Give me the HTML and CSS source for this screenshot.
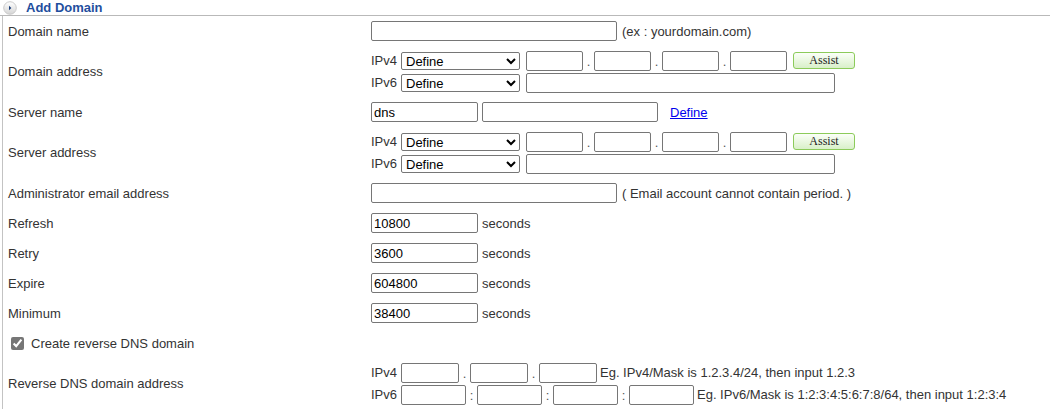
FILE: index.html
```html
<!DOCTYPE html>
<html>
<head>
<meta charset="utf-8">
<title>Add Domain</title>
<link rel="stylesheet" href="styles.css">
</head>
<body>
<div class="title">
  <svg class="icon" width="14" height="14" viewBox="0 0 14 14">
    <defs>
      <linearGradient id="g" x1="0" y1="0" x2="0" y2="1">
        <stop offset="0" stop-color="#ffffff"/>
        <stop offset="1" stop-color="#d4d4d4"/>
      </linearGradient>
    </defs>
    <circle cx="7" cy="7" r="6.3" fill="url(#g)" stroke="#c6c6c6" stroke-width="0.9"/>
    <path d="M6 4.8 L8.4 7 L6 9.2 Z" fill="#1c3f7a"/>
  </svg>
  <h1 class="title-text">Add Domain</h1>
</div>
<div class="form">
  <div class="row">
    <div class="label">Domain name</div>
    <div class="field-line">
      <input class="txt w246" type="text">
      <span class="note">(ex : yourdomain.com)</span>
    </div>
  </div>
  <div class="row double">
    <div class="label">Domain address</div>
    <div class="field">
      <div class="line">
        <span class="ip-label">IPv4</span>
        <select class="sel"><option>Define</option></select>
        <input class="txt oct" type="text"><span class="sep">.</span>
        <input class="txt oct" type="text"><span class="sep">.</span>
        <input class="txt oct" type="text"><span class="sep">.</span>
        <input class="txt oct" type="text">
        <button class="assist" type="button">Assist</button>
      </div>
      <div class="line">
        <span class="ip-label">IPv6</span>
        <select class="sel"><option>Define</option></select>
        <input class="txt w309" type="text">
      </div>
    </div>
  </div>
  <div class="row">
    <div class="label">Server name</div>
    <div class="field-line">
      <input class="txt w107" type="text" value="dns">
      <input class="txt w176" type="text">
      <a class="link" href="#">Define</a>
    </div>
  </div>
  <div class="row double">
    <div class="label">Server address</div>
    <div class="field">
      <div class="line">
        <span class="ip-label">IPv4</span>
        <select class="sel"><option>Define</option></select>
        <input class="txt oct" type="text"><span class="sep">.</span>
        <input class="txt oct" type="text"><span class="sep">.</span>
        <input class="txt oct" type="text"><span class="sep">.</span>
        <input class="txt oct" type="text">
        <button class="assist" type="button">Assist</button>
      </div>
      <div class="line">
        <span class="ip-label">IPv6</span>
        <select class="sel"><option>Define</option></select>
        <input class="txt w309" type="text">
      </div>
    </div>
  </div>
  <div class="row">
    <div class="label">Administrator email address</div>
    <div class="field-line">
      <input class="txt w246" type="text">
      <span class="note">( Email account cannot contain period. )</span>
    </div>
  </div>
  <div class="row">
    <div class="label">Refresh</div>
    <div class="field-line">
      <input class="txt w107" type="text" value="10800">
      <span class="unit">seconds</span>
    </div>
  </div>
  <div class="row">
    <div class="label">Retry</div>
    <div class="field-line">
      <input class="txt w107" type="text" value="3600">
      <span class="unit">seconds</span>
    </div>
  </div>
  <div class="row">
    <div class="label">Expire</div>
    <div class="field-line">
      <input class="txt w107" type="text" value="604800">
      <span class="unit">seconds</span>
    </div>
  </div>
  <div class="row">
    <div class="label">Minimum</div>
    <div class="field-line">
      <input class="txt w107" type="text" value="38400">
      <span class="unit">seconds</span>
    </div>
  </div>
  <div class="row">
    <label class="check-label"><input class="chk" type="checkbox" checked>Create reverse DNS domain</label>
  </div>
  <div class="row double">
    <div class="label">Reverse DNS domain address</div>
    <div class="field">
      <div class="line">
        <span class="ip-label">IPv4</span>
        <input class="txt oct4" type="text"><span class="sep">.</span>
        <input class="txt oct4" type="text"><span class="sep">.</span>
        <input class="txt oct4" type="text">
        <span class="hint">Eg. IPv4/Mask is 1.2.3.4/24, then input 1.2.3</span>
      </div>
      <div class="line">
        <span class="ip-label">IPv6</span>
        <input class="txt oct6" type="text"><span class="sep">:</span>
        <input class="txt oct6" type="text"><span class="sep">:</span>
        <input class="txt oct6" type="text"><span class="sep">:</span>
        <input class="txt oct6" type="text">
        <span class="hint">Eg. IPv6/Mask is 1:2:3:4:5:6:7:8/64, then input 1:2:3:4</span>
      </div>
    </div>
  </div>
</div>
</body>
</html>
```

FILE: styles.css
```css
body {
  margin: 0;
  font-family: "Liberation Sans", Arial, sans-serif;
  font-size: 13px;
  color: #333;
  background: #fff;
}

.title {
  height: 15px;
  border-bottom: 1px solid #b9b9b9;
  display: flex;
  align-items: center;
}

.icon {
  flex: none;
  margin-left: 3px;
}

.title-text {
  margin: 0 0 0 9px;
  font-size: 13px;
  line-height: 15px;
  font-weight: bold;
  color: #1f4f9e;
}

.form {
  margin-left: 2px;
  border-left: 1px solid #c3c3c3;
}

.row {
  display: flex;
  align-items: center;
  height: 30px;
}

.row.double {
  height: 51px;
}

.label {
  flex: none;
  box-sizing: border-box;
  width: 368px;
  padding-left: 5px;
}

.field {
  display: flex;
  flex-direction: column;
  gap: 2px;
}

.field-line,
.line {
  display: flex;
  align-items: center;
  height: 20px;
}

.ip-label {
  flex: none;
  width: 30px;
}

.txt {
  box-sizing: border-box;
  height: 20px;
  margin: 0;
  padding: 0 2px;
  border: 1px solid #767676;
  border-radius: 2px;
  font-family: "Liberation Sans", Arial, sans-serif;
  font-size: 13px;
  color: #000;
  background: #fff;
}

.sel {
  box-sizing: border-box;
  width: 119px;
  height: 18px;
  margin: 0 6px 0 0;
  border: 1px solid #767676;
  border-radius: 2px;
  font-family: "Liberation Sans", Arial, sans-serif;
  font-size: 13px;
  color: #000;
  background: #fff;
}

.oct { width: 57px; }
.oct4 { width: 58px; }
.oct6 { width: 65px; }
.w309 { width: 309px; }
.w246 { width: 246px; }
.w107 { width: 107px; }
.w176 { width: 176px; margin-left: 4px; }

.sep {
  flex: none;
  width: 11px;
  text-align: center;
  line-height: 20px;
  padding-top: 2px;
  color: #555;
}

.assist {
  box-sizing: border-box;
  width: 62px;
  height: 17px;
  margin-left: 6px;
  padding: 0;
  border: 1px solid #8ccb5a;
  border-radius: 3px;
  background: linear-gradient(#fbfff8, #d9f0c9);
  font-family: "Liberation Serif", "Times New Roman", serif;
  font-size: 12px;
  color: #222;
}

.note {
  margin-left: 5px;
}

.unit {
  margin-left: 4px;
}

.link {
  margin-left: 12px;
  color: #0000ee;
  text-decoration: underline;
}

.hint {
  margin-left: 3px;
}

.check-label {
  display: flex;
  align-items: center;
  padding-left: 8px;
}

.chk {
  width: 13px;
  height: 13px;
  margin: 0 7px 0 0;
  accent-color: #767676;
}
```
